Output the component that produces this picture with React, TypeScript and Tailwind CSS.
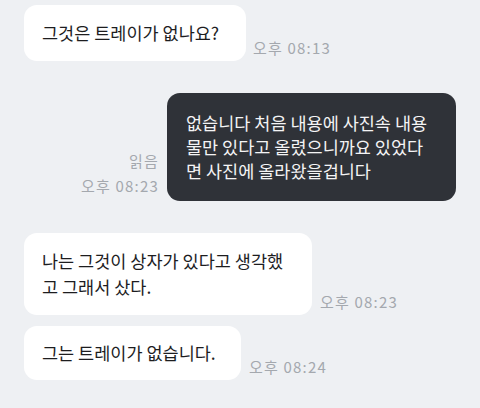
const font = { fontFamily: '"Noto Sans CJK KR", "Noto Sans", sans-serif' };

function Time({ children }: { children: React.ReactNode }) {
  return (
    <span className="mb-[3px] whitespace-nowrap text-[15px] leading-5 tracking-[0.08em] text-[#a4a8ae]">
      {children}
    </span>
  );
}

function InBubble({ w, children, py = "py-4", leading = "leading-6" }: { w: string; children: React.ReactNode; py?: string; leading?: string }) {
  return (
    <div className={`${w} ${py} ${leading} rounded-[13px] bg-white px-[18px] text-[17.5px] text-[#1d1d1f]`}>
      {children}
    </div>
  );
}

export default function App() {
  return (
    <div className="h-[408px] w-[480px] overflow-hidden bg-[#eef0f3] px-6 pt-[5px]" style={font}>
      <div className="flex items-end gap-[7px]">
        <InBubble w="w-[222px]">그것은 트레이가 없나요?</InBubble>
        <Time>오후 08:13</Time>
      </div>

      <div className="mt-[32px] flex items-end justify-end gap-2">
        <div className="mb-[3px] flex flex-col items-end text-[15px] leading-[25px] tracking-[0.08em] text-[#a4a8ae]">
          <span>읽음</span>
          <span>오후 08:23</span>
        </div>
        <div className="w-[289px] rounded-[13px] bg-[#2f3238] px-[19px] py-[18px] text-[17.5px] leading-6 text-[#f4f4f5]">
          없습니다 처음 내용에 사진속 내용
          <br />
          물만 있다고 올렸으니까요 있었다
          <br />
          면 사진에 올라왔을겁니다
        </div>
      </div>

      <div className="mt-[32px] flex items-end gap-2">
        <InBubble w="w-[288px]" py="py-[15px]" leading="leading-[26px]">
          나는 그것이 상자가 있다고 생각했
          <br />고 그래서 샀다.
        </InBubble>
        <Time>오후 08:23</Time>
      </div>

      <div className="mt-[11px] flex items-end gap-2">
        <InBubble w="w-[217px]" py="py-[15px]">그는 트레이가 없습니다.</InBubble>
        <Time>오후 08:24</Time>
      </div>
    </div>
  );
}
